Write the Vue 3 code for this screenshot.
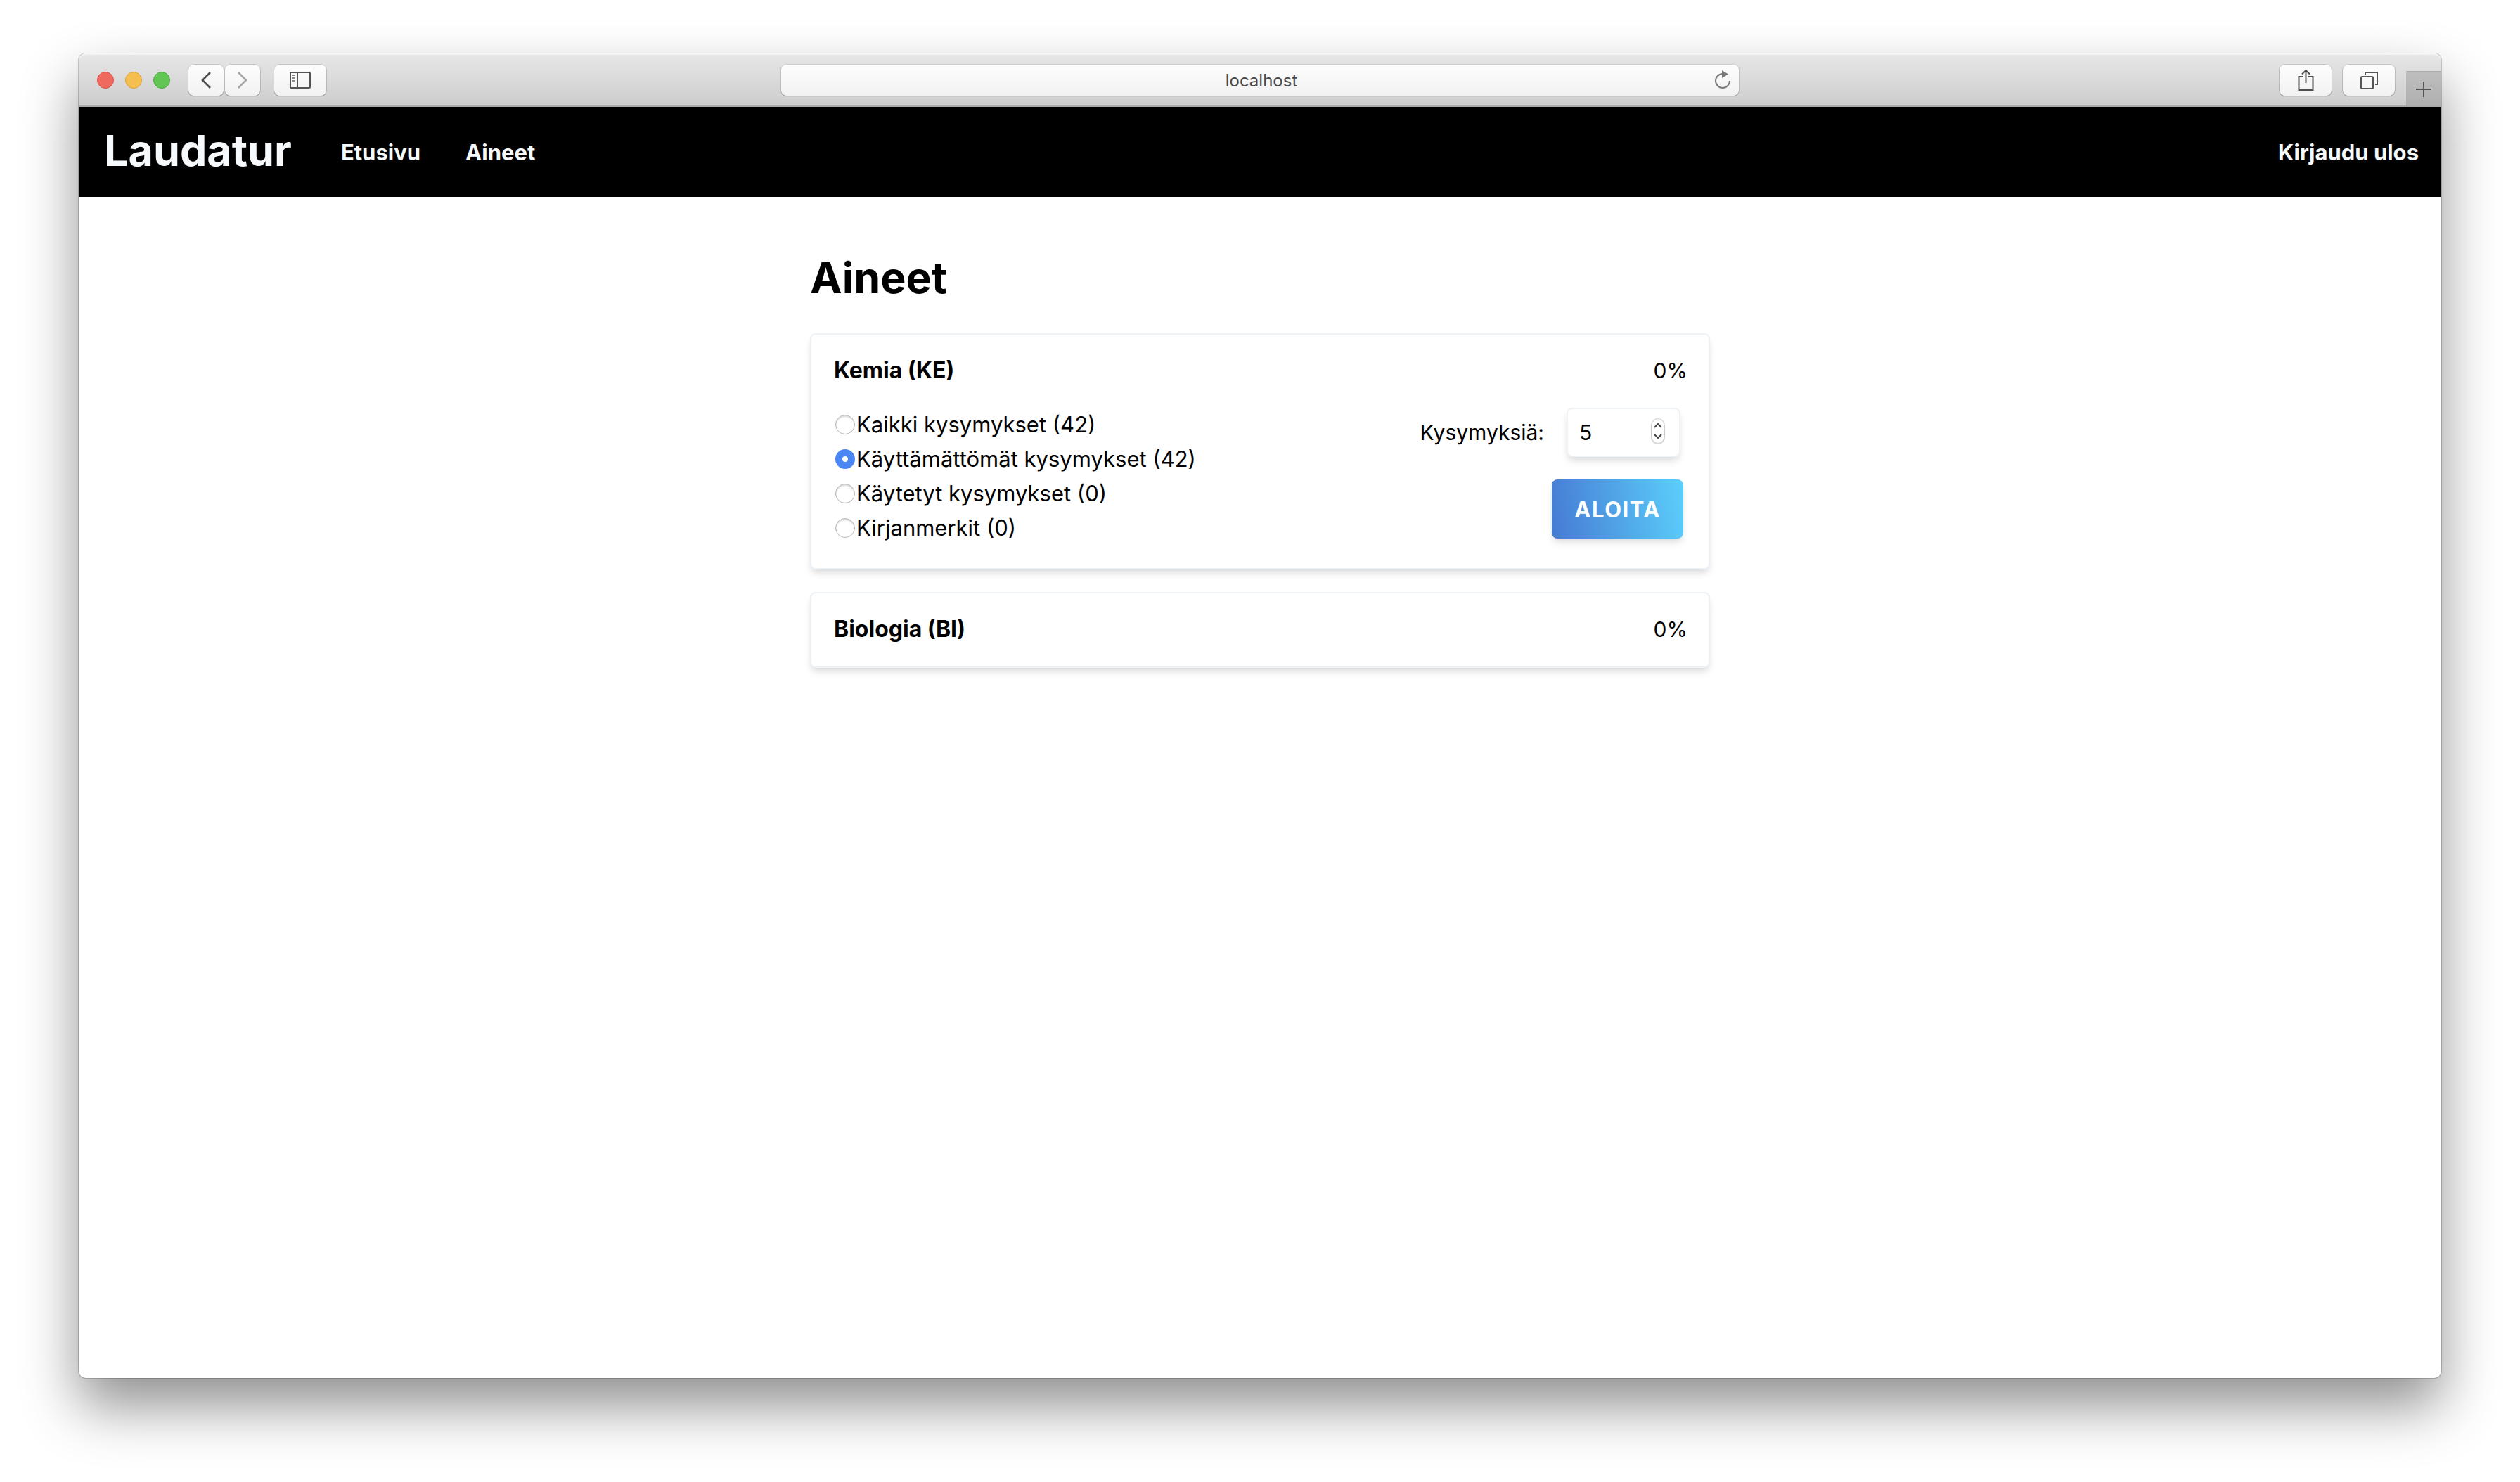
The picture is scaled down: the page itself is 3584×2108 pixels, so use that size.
<script setup>
import { ref } from 'vue'

const lights = ['close', 'minimize', 'maximize']
const options = [
  { id: 'all', label: 'Kaikki kysymykset (42)' },
  { id: 'unused', label: 'Käyttämättömät kysymykset (42)' },
  { id: 'used', label: 'Käytetyt kysymykset (0)' },
  { id: 'bookmarks', label: 'Kirjanmerkit (0)' },
]
const selected = ref('unused')
const count = ref(5)
</script>

<template>
  <div class="desktop">
    <div class="window">
      <div class="toolbar">
        <div class="side">
          <div class="lights">
            <span v-for="l in lights" :key="l" class="light" :class="l"></span>
          </div>
          <div class="history">
            <button class="tool narrow" type="button" aria-label="Takaisin">
              <svg width="50" height="44" viewBox="0 0 50 44"><path d="M31 11 20 22l11 11" fill="none" stroke="#4f4f4f" stroke-width="2.6" /></svg>
            </button>
            <button class="tool narrow" type="button" aria-label="Eteenpäin">
              <svg width="50" height="44" viewBox="0 0 50 44"><path d="M19 11l11 11-11 11" fill="none" stroke="#a6a6a6" stroke-width="2.6" /></svg>
            </button>
          </div>
          <button class="tool" type="button" aria-label="Sivupalkki">
            <svg width="74" height="44" viewBox="0 0 74 44">
              <rect x="23" y="11" width="28" height="22" rx="1" fill="none" stroke="#555" stroke-width="2" />
              <path d="M33 11v22" stroke="#555" stroke-width="2" />
              <path d="M26 15h4M26 19h4M26 23h4" stroke="#8a8a8a" stroke-width="2" />
            </svg>
          </button>
        </div>
        <div class="address">
          <span class="host">localhost</span>
          <button class="reload" type="button" aria-label="Lataa uudelleen">
            <svg width="26" height="28" viewBox="0 0 26 28">
              <path d="M13 5A10 10 0 1 0 23 15" fill="none" stroke="#7a7a7a" stroke-width="2" />
              <path d="M12 0v11l9-5.500z" fill="#7a7a7a" />
            </svg>
          </button>
        </div>
        <div class="side end">
          <button class="tool" type="button" aria-label="Jaa">
            <svg width="74" height="44" viewBox="0 0 74 44">
              <path d="M34 17h-6.500v19h20V17H41M37.500 26V8M32 13.500 37.500 8l5.500 5.500" fill="none" stroke="#4f4f4f" stroke-width="2" />
            </svg>
          </button>
          <button class="tool" type="button" aria-label="Välilehdet">
            <svg width="74" height="44" viewBox="0 0 74 44">
              <rect x="26" y="17" width="17" height="17" rx="1.500" fill="none" stroke="#555" stroke-width="2" />
              <path d="M32 14v-3h17v17h-3" fill="none" stroke="#555" stroke-width="2" />
            </svg>
          </button>
          <button class="newtab" type="button" aria-label="Uusi välilehti">
            <svg width="50" height="49" viewBox="0 0 50 49"><path d="M14 26h22M25 15v22" stroke="#555" stroke-width="2" /></svg>
          </button>
        </div>
      </div>

      <header class="navbar">
        <a class="brand" href="#">Laudatur</a>
        <nav class="links">
          <a href="#">Etusivu</a>
          <a href="#">Aineet</a>
        </nav>
        <a class="logout" href="#">Kirjaudu ulos</a>
      </header>

      <main class="content">
        <h1>Aineet</h1>
        <section class="card">
          <div class="card-head">
            <h2>Kemia (KE)</h2>
            <span class="percent">0%</span>
          </div>
          <form class="quiz" @submit.prevent>
            <div class="options">
              <label v-for="o in options" :key="o.id" class="option">
                <input v-model="selected" type="radio" name="pool" :value="o.id" />
                <span>{{ o.label }}</span>
              </label>
            </div>
            <div class="start">
              <div class="amount">
                <label for="count">Kysymyksiä:</label>
                <div class="field">
                  <input id="count" v-model="count" type="number" />
                  <svg class="stepper" width="20" height="36" viewBox="0 0 20 36">
                    <path d="M5 13l5-5 5 5M5 23l5 5 5-5" fill="none" stroke="#444" stroke-width="2" />
                  </svg>
                </div>
              </div>
              <button class="go" type="submit">ALOITA</button>
            </div>
          </form>
        </section>
        <section class="card">
          <div class="card-head">
            <h2>Biologia (BI)</h2>
            <span class="percent">0%</span>
          </div>
        </section>
      </main>
    </div>
  </div>
</template>

<style>
body {
  margin: 0;
  background: #fff;
}
</style>

<style scoped>
* {
  box-sizing: border-box;
}
.desktop {
  display: flex;
  min-height: 100vh;
  padding: 76px 112px 148px;
  font-family: Inter, "Liberation Sans", sans-serif;
  font-size: 31px;
  line-height: 48px;
  color: #000;
}
.window {
  flex: 1;
  border-radius: 10px;
  background: #fff;
  box-shadow: 0 0 0 1px rgba(0, 0, 0, 0.2), 0 40px 80px rgba(0, 0, 0, 0.44);
}
svg {
  display: block;
}
button {
  padding: 0;
  border: 0;
  background: none;
  font: inherit;
}
.toolbar {
  display: flex;
  align-items: center;
  height: 76px;
  padding-top: 2px;
  border-bottom: 2px solid #a9aaaa;
  border-radius: 10px 10px 0 0;
  background: linear-gradient(#e7e7e7, #cdcdcd);
  box-shadow: inset 0 2px 0 #f4f4f4;
}
.side {
  display: flex;
  flex: 1;
  align-items: center;
}
.end {
  justify-content: flex-end;
  align-self: stretch;
  gap: 16px;
}
.lights {
  display: flex;
  gap: 16px;
  margin: 0 26px;
}
.light {
  width: 24px;
  height: 24px;
  border: 1px solid;
  border-radius: 50%;
}
.close {
  border-color: #dc5147;
  background: #ee6a5f;
}
.minimize {
  border-color: #dba33c;
  background: #f5bf4f;
}
.maximize {
  border-color: #4ea93e;
  background: #61c654;
}
.history {
  display: flex;
  gap: 2px;
  margin-right: 20px;
}
.tool {
  width: 74px;
  height: 44px;
  border-radius: 8px;
  background: linear-gradient(#fdfdfd, #f2f2f2);
  box-shadow: 0 0 0 1px rgba(0, 0, 0, 0.12), 0 1px 1px rgba(0, 0, 0, 0.3);
}
.narrow {
  width: 50px;
}
.address {
  display: flex;
  flex: 0 1 1362px;
  align-items: center;
  height: 44px;
  padding: 0 10px 0 40px;
  border-radius: 8px;
  background: linear-gradient(#fdfdfd, #f2f2f2);
  box-shadow: 0 0 0 1px rgba(0, 0, 0, 0.1), 0 1px 1px rgba(0, 0, 0, 0.3);
}
.host {
  flex: 1;
  padding-top: 2px;
  font-size: 24px;
  line-height: 42px;
  text-align: center;
  color: #4a4a4a;
}
.newtab {
  align-self: flex-end;
  width: 50px;
  height: 49px;
  background: linear-gradient(#bebebe, #b0b0b0);
  box-shadow: inset 0 1px 0 #adadad;
}
.navbar {
  display: flex;
  align-items: flex-start;
  height: 128px;
  padding: 0 32px 0 36px;
  background: #000;
  font-weight: 700;
  line-height: 130px;
}
.navbar a {
  color: #f7fafc;
  text-decoration: none;
}
.navbar .brand {
  margin-right: 70px;
  font-size: 61px;
  line-height: 124px;
}
.links {
  display: flex;
  flex: 1;
  gap: 64px;
}
.content {
  width: 1280px;
  max-width: 100%;
  margin: 0 auto;
  padding-top: 72px;
}
h1 {
  margin: 0 0 36px;
  font-size: 61px;
  font-weight: 700;
  line-height: 86px;
}
.card {
  margin-bottom: 32px;
  padding: 27px 30px 29px 32px;
  border: 2px solid #edf2f7;
  border-radius: 8px;
  background: #fff;
  box-shadow: 0 8px 12px -2px rgba(0, 0, 0, 0.1), 0 4px 8px -2px rgba(0, 0, 0, 0.06);
}
.card-head {
  display: flex;
  justify-content: space-between;
}
.percent,
.amount {
  font-size: 30px;
}
h2 {
  margin: 0;
  font-size: 32px;
  font-weight: 700;
  line-height: 48px;
}
.quiz {
  display: flex;
  justify-content: space-between;
}
.options {
  padding-top: 28px;
}
.option {
  display: flex;
  align-items: center;
  gap: 2px;
  height: 49px;
}
.option input {
  width: 28px;
  height: 28px;
  margin: 0 0 0 2px;
  border: 1px solid #b4b4b4;
  border-radius: 50%;
  background: #fff;
  box-shadow: inset 0 2px 2px rgba(0, 0, 0, 0.15);
  appearance: none;
}
.option input:checked {
  border: 10px solid #4a87f5;
  box-shadow: none;
}
.start {
  display: flex;
  flex-direction: column;
  align-items: flex-end;
  gap: 32px;
  padding: 29px 6px 13px 0;
}
.amount {
  display: flex;
  align-items: center;
  gap: 32px;
  margin-right: 4px;
}
.field {
  position: relative;
}
.field input {
  display: block;
  width: 162px;
  height: 70px;
  padding: 0 16px;
  border: 2px solid #edf2f7;
  border-radius: 8px;
  background: #fff;
  box-shadow: 0 8px 12px -2px rgba(0, 0, 0, 0.1), 0 4px 8px -2px rgba(0, 0, 0, 0.06);
  font: inherit;
  appearance: textfield;
}
.stepper {
  position: absolute;
  top: 15px;
  right: 22px;
  border-radius: 10px;
  background: #fff;
  box-shadow: inset 0 0 0 1px #ccc, 0 1px 1px rgba(0, 0, 0, 0.2);
}
.go {
  height: 84px;
  padding: 2px 32px 0;
  border-radius: 8px;
  background: linear-gradient(80deg, #467ad3, #5bcffb);
  box-shadow: 0 8px 12px -2px rgba(0, 0, 0, 0.1), 0 4px 8px -2px rgba(0, 0, 0, 0.06);
  font-weight: 700;
  letter-spacing: 0.05em;
  color: #fff;
}
</style>
